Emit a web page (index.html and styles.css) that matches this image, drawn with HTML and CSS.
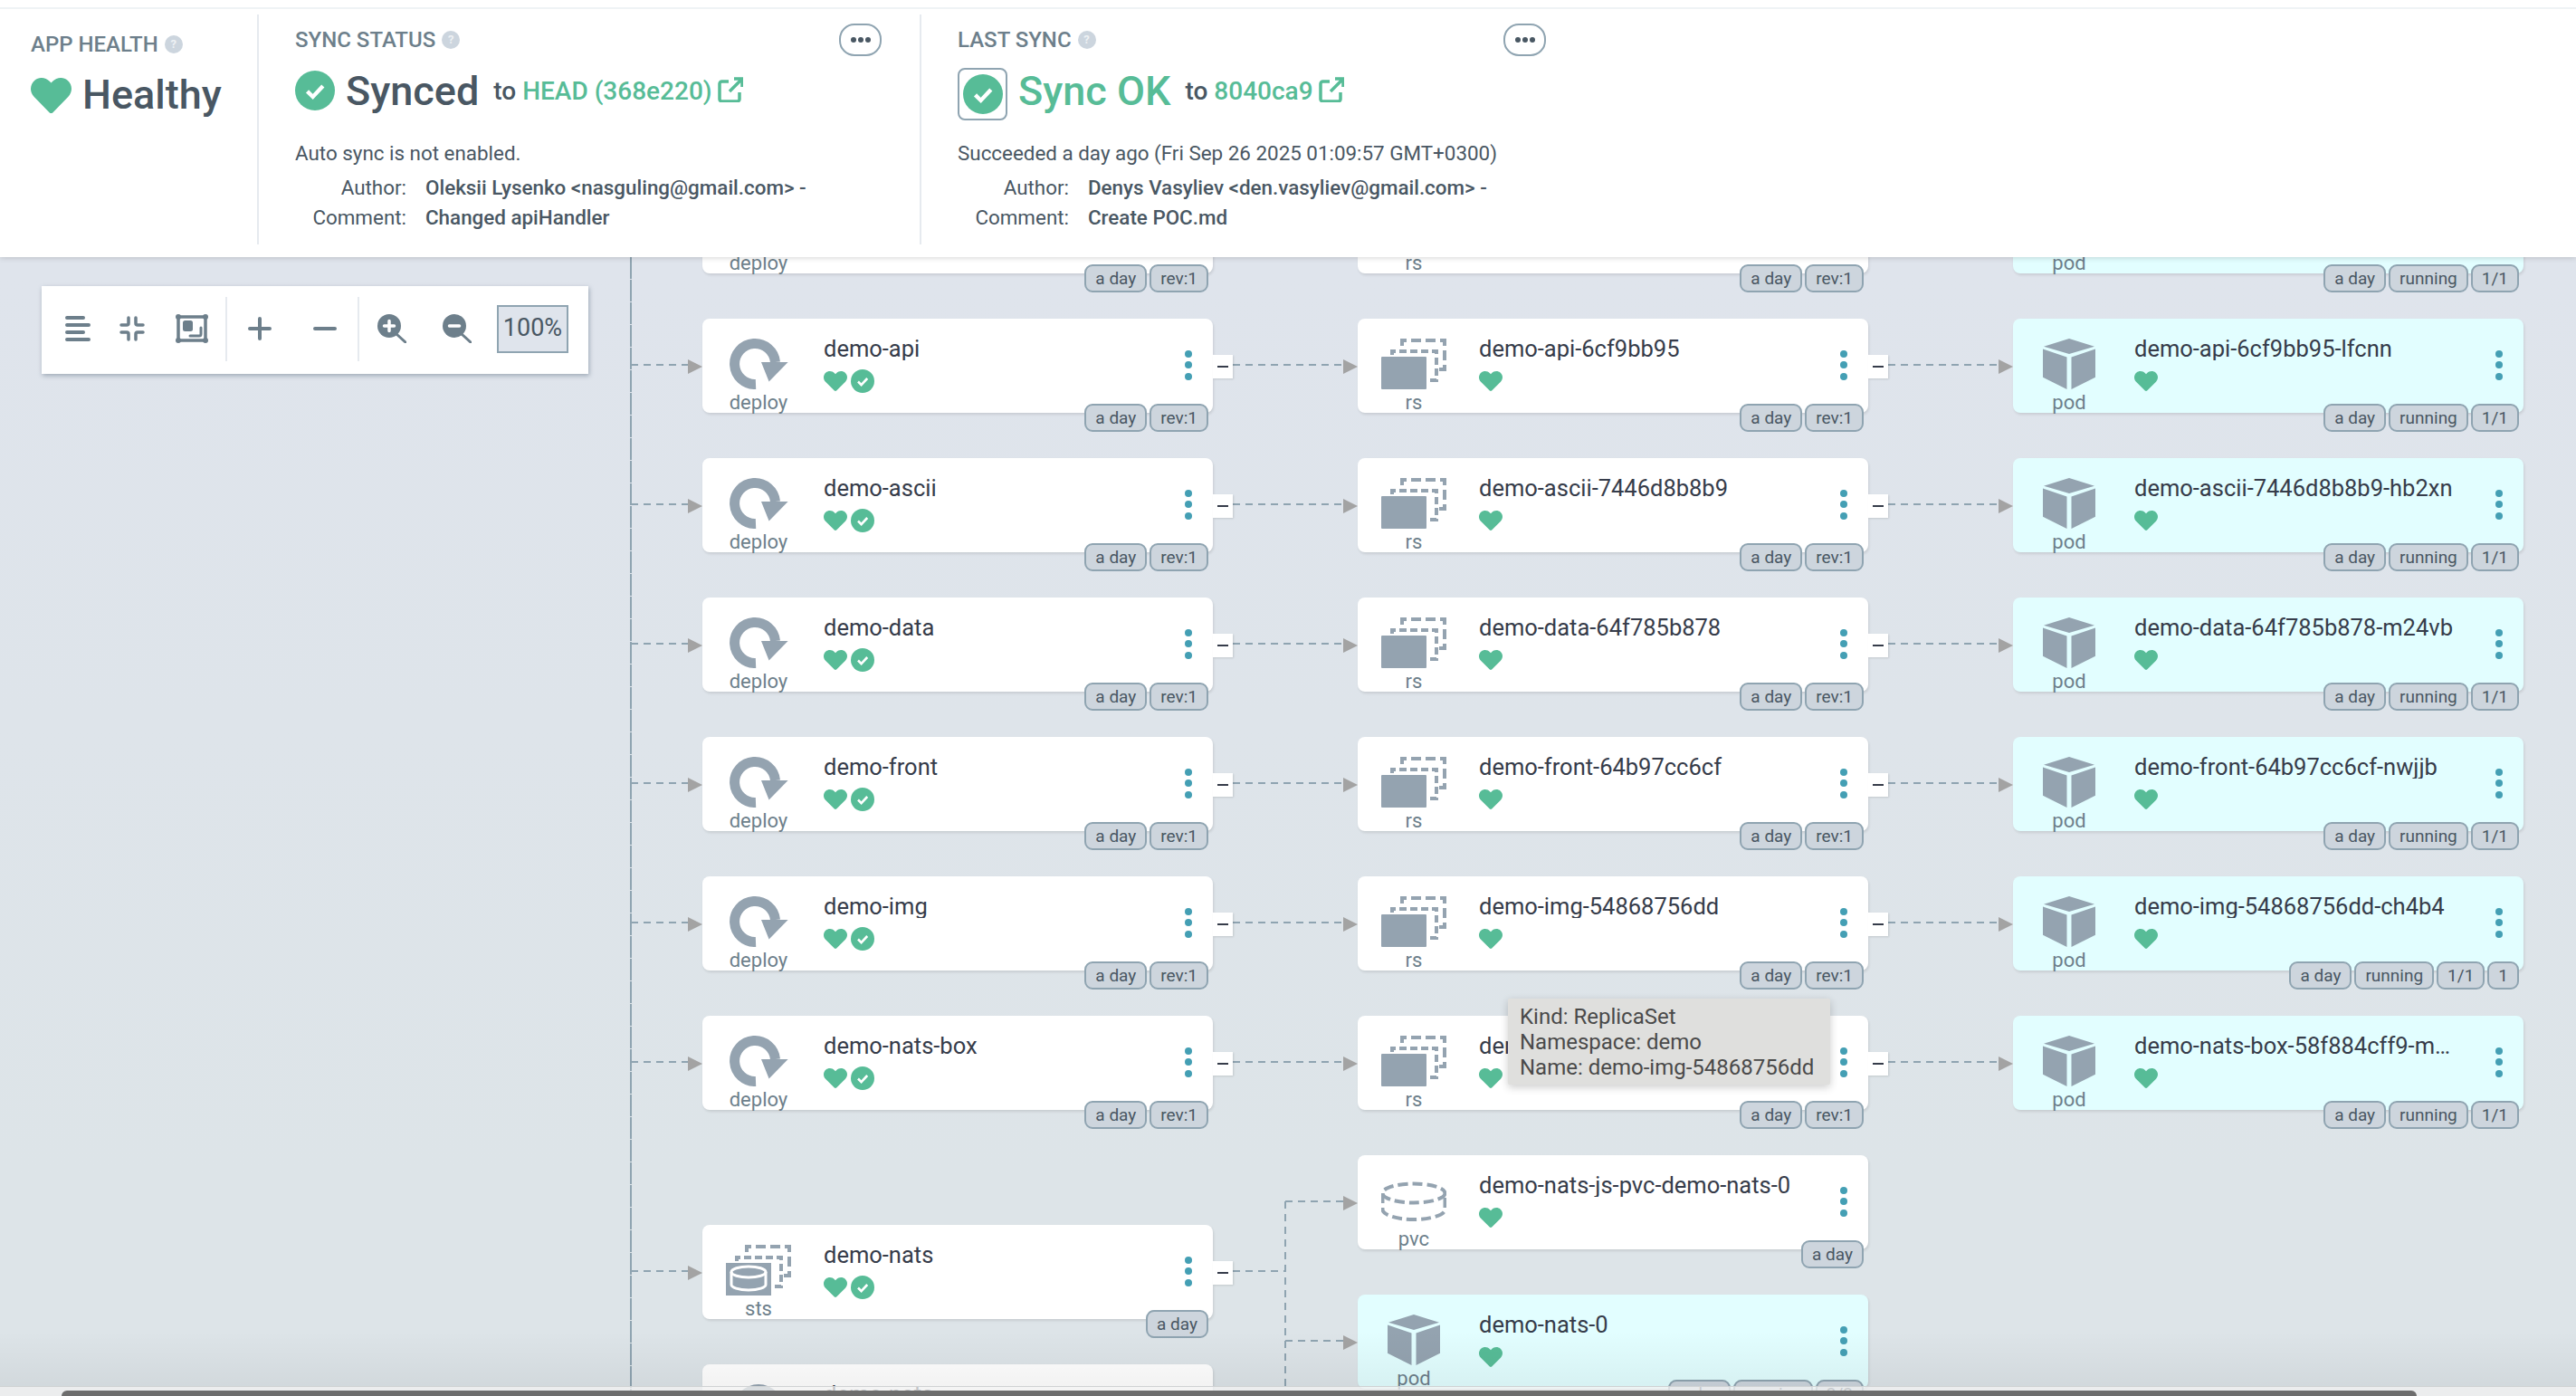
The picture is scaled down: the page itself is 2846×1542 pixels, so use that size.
FILE: index.html
```html
<!DOCTYPE html>
<html lang="en">

<head>
    <meta charset="UTF-8">
    <title>demo - Application Details</title>
    <link rel="stylesheet" href="styles.css">
</head>

<body>
    <svg class="defs" aria-hidden="true">
        <symbol id="heart" viewBox="0 32 512 448" preserveAspectRatio="none">
            <path d="M462.3 62.6C407.5 15.9 326 24.3 275.7 76.2L256 96.5l-19.7-20.3C186.1 24.3 104.5 15.9 49.7 62.6c-62.8 53.6-66.1 149.8-9.9 207.9l193.5 199.8c12.5 12.9 32.8 12.9 45.3 0l193.5-199.8c56.3-58.1 53-154.3-9.8-207.9z" />
        </symbol>
        <symbol id="check" viewBox="0 0 26 26">
            <circle cx="13" cy="13" r="13" />
            <path d="M8 13.5l3.6 3.6L18.2 10" fill="none" stroke="#fff" stroke-width="2.6" />
        </symbol>
        <symbol id="link" viewBox="0 0 28 28">
            <path d="M12 5H4.5A2.5 2.5 0 0 0 2 7.5v17A2.5 2.5 0 0 0 4.500 27h17a2.500 2.500 0 0 0 2.500-2.500V17M13 16L26 3M18 2h9v9" fill="none" stroke="currentColor" stroke-width="3.500" />
        </symbol>
        <symbol id="deploy" viewBox="0 0 66 56">
            <path d="M30 50.500A22.500 22.500 0 1 1 51.500 26" fill="none" stroke="#94a3b0" stroke-width="11" />
            <path d="M36 26H65.600L44.600 47.600z" fill="#94a3b0" />
        </symbol>
        <symbol id="rs" viewBox="0 0 72 56">
            <path d="M12 18V14H61V46H50" fill="none" stroke="#94a3b0" stroke-width="4" stroke-dasharray="8 4" />
            <path d="M23 8V2H70V34H61" fill="none" stroke="#94a3b0" stroke-width="4" stroke-dasharray="11 5" />
            <rect y="20" width="50" height="36" rx="1" fill="#94a3b0" />
        </symbol>
        <symbol id="sts" viewBox="0 0 72 56">
            <path d="M12 18V14H61V46H50" fill="none" stroke="#94a3b0" stroke-width="4" stroke-dasharray="8 4" />
            <path d="M23 8V2H70V34H61" fill="none" stroke="#94a3b0" stroke-width="4" stroke-dasharray="11 5" />
            <rect y="20" width="50" height="36" fill="#94a3b0" />
            <path d="M6 30v14c0 3 8 6 19 6s19-3 19-6V30" fill="none" stroke="#fff" stroke-width="3" />
            <ellipse cx="25" cy="30" rx="19" ry="6" fill="none" stroke="#fff" stroke-width="3" />
        </symbol>
        <symbol id="pod" viewBox="0 0 58 56">
            <path d="M29 0L57 8.700 29 17 1 8.700zM0 11.500L26.500 20.500V56L0 42.700zM58 11.500L31.500 20.500V56L58 42.700z" fill="#94a3b0" />
        </symbol>
        <symbol id="pvc" viewBox="0 0 72 44">
            <ellipse cx="36" cy="13" rx="34.500" ry="10.500" fill="none" stroke="#94a3b0" stroke-width="4" stroke-dasharray="11 5" />
            <path d="M1.500 13v18c0 6 16 11 34.500 11s34.500-5 34.500-11V13" fill="none" stroke="#94a3b0" stroke-width="4" stroke-dasharray="11 5" />
        </symbol>
        <symbol id="svc" viewBox="0 0 56 56">
            <circle cx="28" cy="28" r="28" fill="#94a3b0" />
        </symbol>
    </svg>

    <header class="status">
        <div class="topline"></div>
        <div class="panels">
            <section class="panel health">
                <h4>APP HEALTH <i class="help">?</i></h4>
                <div class="health-row">
                    <svg class="heart-big"><use href="#heart" /></svg>
                    <span>Healthy</span>
                </div>
            </section>

            <section class="panel">
                <div class="panel-head">
                    <h4>SYNC STATUS <i class="help">?</i></h4>
                    <button class="more"><i></i><i></i><i></i></button>
                </div>
                <div class="big-row">
                    <svg class="check-big"><use href="#check" /></svg>
                    <span class="big">Synced</span>
                    <span class="to">to</span>
                    <a class="rev">HEAD (368e220)</a>
                    <svg class="ext"><use href="#link" /></svg>
                </div>
                <p class="msg">Auto sync is not enabled.</p>
                <dl class="meta">
                    <dt>Author:</dt>
                    <dd>Oleksii Lysenko &lt;nasguling@gmail.com&gt; -</dd>
                    <dt>Comment:</dt>
                    <dd>Changed apiHandler</dd>
                </dl>
            </section>

            <section class="panel">
                <div class="panel-head">
                    <h4>LAST SYNC <i class="help">?</i></h4>
                    <button class="more"><i></i><i></i><i></i></button>
                </div>
                <div class="big-row">
                    <div class="op-box"><svg class="check-big"><use href="#check" /></svg></div>
                    <span class="big ok">Sync OK</span>
                    <span class="to">to</span>
                    <a class="rev">8040ca9</a>
                    <svg class="ext"><use href="#link" /></svg>
                </div>
                <p class="msg">Succeeded a day ago (Fri Sep 26 2025 01:09:57 GMT+0300)</p>
                <dl class="meta">
                    <dt>Author:</dt>
                    <dd>Denys Vasyliev &lt;den.vasyliev@gmail.com&gt; -</dd>
                    <dt>Comment:</dt>
                    <dd>Create POC.md</dd>
                </dl>
            </section>
        </div>
    </header>

    <main class="graph">
        <svg class="edges" viewBox="0 284 2846 1258">
            <path class="trunk" d="M697 284V1542" />
            <path class="edge" d="M697 249H762M697 403H762M697 557H762M697 711H762M697 865H762M697 1019H762M697 1173H762M697 1404H762M697 1558H762" />
            <path class="edge" d="M1362 249H1486M1362 403H1486M1362 557H1486M1362 711H1486M1362 865H1486M1362 1019H1486M1362 1173H1486" />
            <path class="edge" d="M2086 249H2210M2086 403H2210M2086 557H2210M2086 711H2210M2086 865H2210M2086 1019H2210M2086 1173H2210" />
            <path class="edge" d="M1362 1404H1420M1420 1327V1542M1420 1327H1486M1420 1481H1486" />
            <path class="arrow" d="M760 397l16 8-16 8zM760 551l16 8-16 8zM760 705l16 8-16 8zM760 859l16 8-16 8zM760 1013l16 8-16 8zM760 1167l16 8-16 8zM760 1398l16 8-16 8z" />
            <path class="arrow" d="M1484 397l16 8-16 8zM1484 551l16 8-16 8zM1484 705l16 8-16 8zM1484 859l16 8-16 8zM1484 1013l16 8-16 8zM1484 1167l16 8-16 8zM1484 1321l16 8-16 8zM1484 1475l16 8-16 8z" />
            <path class="arrow" d="M2208 397l16 8-16 8zM2208 551l16 8-16 8zM2208 705l16 8-16 8zM2208 859l16 8-16 8zM2208 1013l16 8-16 8zM2208 1167l16 8-16 8z" />
        </svg>

        <div class="toolbar">
            <svg class="tool t-align" viewBox="0 0 28 28"><path d="M2 2H20M2 10H26M2 18H20M2 26H26" /></svg>
            <svg class="tool t-compress" viewBox="0 0 28 28"><path d="M10 2V8a2 2 0 0 1-2 2H2M18 2V8a2 2 0 0 0 2 2H26M10 26V20a2 2 0 0 0-2-2H2M18 26V20a2 2 0 0 1 2-2H26" /></svg>
            <svg class="tool t-fit" viewBox="0 0 36 32">
                <path d="M3 3H33V29H3z" />
                <circle class="solid" cx="3" cy="3" r="3" />
                <circle class="solid" cx="33" cy="3" r="3" />
                <circle class="solid" cx="3" cy="29" r="3" />
                <circle class="solid" cx="33" cy="29" r="3" />
                <rect class="solid" x="8" y="7" width="11" height="12" rx="2.500" />
                <path class="thin" d="M28 15V22a2 2 0 0 1-2 2H16" />
            </svg>
            <div class="sep"></div>
            <svg class="tool t-plus" viewBox="0 0 26 26"><path d="M13 2V24M2 13H24" /></svg>
            <svg class="tool t-minus" viewBox="0 0 26 26"><path d="M2 13H24" /></svg>
            <div class="sep sep-2"></div>
            <svg class="tool t-zoom" viewBox="0 0 32 32">
                <circle class="solid" cx="13" cy="13" r="13" />
                <path class="thin" d="M21 22L31 31" />
                <path class="white" d="M13 7.500V18.500M7.500 13H18.500" />
            </svg>
            <svg class="tool t-zoom t-zoom-2" viewBox="0 0 32 32">
                <circle class="solid" cx="13" cy="13" r="13" />
                <path class="thin" d="M21 22L31 31" />
                <path class="white" d="M7.500 13H18.500" />
            </svg>
            <div class="zoom-level">100%</div>
        </div>

        <!-- row above the fold -->
        <div class="node c1 r0"><div class="kind"><svg class="ic deploy"><use href="#deploy" /></svg><span>deploy</span></div><div class="tags"><span>a day</span><span>rev:1</span></div></div>
        <div class="node c2 r0"><div class="kind"><svg class="ic rs"><use href="#rs" /></svg><span>rs</span></div><div class="tags"><span>a day</span><span>rev:1</span></div></div>
        <div class="node c3 r0 pod"><div class="kind"><svg class="ic cube"><use href="#pod" /></svg><span>pod</span></div><div class="tags"><span>a day</span><span>running</span><span>1/1</span></div></div>

        <!-- deployments -->
        <div class="node c1 r1">
            <div class="kind"><svg class="ic deploy"><use href="#deploy" /></svg><span>deploy</span></div>
            <div class="info"><div class="name">demo-api</div><div class="state"><svg class="heart"><use href="#heart" /></svg><svg class="check"><use href="#check" /></svg></div></div>
            <div class="menu"><i></i><i></i><i></i></div><div class="collapse"></div>
            <div class="tags"><span>a day</span><span>rev:1</span></div>
        </div>
        <div class="node c1 r2">
            <div class="kind"><svg class="ic deploy"><use href="#deploy" /></svg><span>deploy</span></div>
            <div class="info"><div class="name">demo-ascii</div><div class="state"><svg class="heart"><use href="#heart" /></svg><svg class="check"><use href="#check" /></svg></div></div>
            <div class="menu"><i></i><i></i><i></i></div><div class="collapse"></div>
            <div class="tags"><span>a day</span><span>rev:1</span></div>
        </div>
        <div class="node c1 r3">
            <div class="kind"><svg class="ic deploy"><use href="#deploy" /></svg><span>deploy</span></div>
            <div class="info"><div class="name">demo-data</div><div class="state"><svg class="heart"><use href="#heart" /></svg><svg class="check"><use href="#check" /></svg></div></div>
            <div class="menu"><i></i><i></i><i></i></div><div class="collapse"></div>
            <div class="tags"><span>a day</span><span>rev:1</span></div>
        </div>
        <div class="node c1 r4">
            <div class="kind"><svg class="ic deploy"><use href="#deploy" /></svg><span>deploy</span></div>
            <div class="info"><div class="name">demo-front</div><div class="state"><svg class="heart"><use href="#heart" /></svg><svg class="check"><use href="#check" /></svg></div></div>
            <div class="menu"><i></i><i></i><i></i></div><div class="collapse"></div>
            <div class="tags"><span>a day</span><span>rev:1</span></div>
        </div>
        <div class="node c1 r5">
            <div class="kind"><svg class="ic deploy"><use href="#deploy" /></svg><span>deploy</span></div>
            <div class="info"><div class="name">demo-img</div><div class="state"><svg class="heart"><use href="#heart" /></svg><svg class="check"><use href="#check" /></svg></div></div>
            <div class="menu"><i></i><i></i><i></i></div><div class="collapse"></div>
            <div class="tags"><span>a day</span><span>rev:1</span></div>
        </div>
        <div class="node c1 r6">
            <div class="kind"><svg class="ic deploy"><use href="#deploy" /></svg><span>deploy</span></div>
            <div class="info"><div class="name">demo-nats-box</div><div class="state"><svg class="heart"><use href="#heart" /></svg><svg class="check"><use href="#check" /></svg></div></div>
            <div class="menu"><i></i><i></i><i></i></div><div class="collapse"></div>
            <div class="tags"><span>a day</span><span>rev:1</span></div>
        </div>
        <div class="node c1 r7">
            <div class="kind"><svg class="ic rs"><use href="#sts" /></svg><span>sts</span></div>
            <div class="info"><div class="name">demo-nats</div><div class="state"><svg class="heart"><use href="#heart" /></svg><svg class="check"><use href="#check" /></svg></div></div>
            <div class="menu"><i></i><i></i><i></i></div><div class="collapse"></div>
            <div class="tags"><span>a day</span></div>
        </div>
        <div class="node c1 r8">
            <div class="kind"><svg class="ic svc"><use href="#svc" /></svg><span>svc</span></div>
            <div class="info"><div class="name">demo-nats</div></div>
        </div>

        <!-- replica sets -->
        <div class="node c2 r1">
            <div class="kind"><svg class="ic rs"><use href="#rs" /></svg><span>rs</span></div>
            <div class="info"><div class="name">demo-api-6cf9bb95</div><div class="state"><svg class="heart"><use href="#heart" /></svg></div></div>
            <div class="menu"><i></i><i></i><i></i></div><div class="collapse"></div>
            <div class="tags"><span>a day</span><span>rev:1</span></div>
        </div>
        <div class="node c2 r2">
            <div class="kind"><svg class="ic rs"><use href="#rs" /></svg><span>rs</span></div>
            <div class="info"><div class="name">demo-ascii-7446d8b8b9</div><div class="state"><svg class="heart"><use href="#heart" /></svg></div></div>
            <div class="menu"><i></i><i></i><i></i></div><div class="collapse"></div>
            <div class="tags"><span>a day</span><span>rev:1</span></div>
        </div>
        <div class="node c2 r3">
            <div class="kind"><svg class="ic rs"><use href="#rs" /></svg><span>rs</span></div>
            <div class="info"><div class="name">demo-data-64f785b878</div><div class="state"><svg class="heart"><use href="#heart" /></svg></div></div>
            <div class="menu"><i></i><i></i><i></i></div><div class="collapse"></div>
            <div class="tags"><span>a day</span><span>rev:1</span></div>
        </div>
        <div class="node c2 r4">
            <div class="kind"><svg class="ic rs"><use href="#rs" /></svg><span>rs</span></div>
            <div class="info"><div class="name">demo-front-64b97cc6cf</div><div class="state"><svg class="heart"><use href="#heart" /></svg></div></div>
            <div class="menu"><i></i><i></i><i></i></div><div class="collapse"></div>
            <div class="tags"><span>a day</span><span>rev:1</span></div>
        </div>
        <div class="node c2 r5">
            <div class="kind"><svg class="ic rs"><use href="#rs" /></svg><span>rs</span></div>
            <div class="info"><div class="name">demo-img-54868756dd</div><div class="state"><svg class="heart"><use href="#heart" /></svg></div></div>
            <div class="menu"><i></i><i></i><i></i></div><div class="collapse"></div>
            <div class="tags"><span>a day</span><span>rev:1</span></div>
        </div>
        <div class="node c2 r6">
            <div class="kind"><svg class="ic rs"><use href="#rs" /></svg><span>rs</span></div>
            <div class="info"><div class="name">demo-nats-box-58f884cff9</div><div class="state"><svg class="heart"><use href="#heart" /></svg></div></div>
            <div class="menu"><i></i><i></i><i></i></div><div class="collapse"></div>
            <div class="tags"><span>a day</span><span>rev:1</span></div>
        </div>
        <div class="node c2 r-pvc">
            <div class="kind"><svg class="ic pvc"><use href="#pvc" /></svg><span>pvc</span></div>
            <div class="info"><div class="name">demo-nats-js-pvc-demo-nats-0</div><div class="state"><svg class="heart"><use href="#heart" /></svg></div></div>
            <div class="menu"><i></i><i></i><i></i></div>
            <div class="tags"><span>a day</span></div>
        </div>
        <div class="node c2 r-pod pod">
            <div class="kind"><svg class="ic cube"><use href="#pod" /></svg><span>pod</span></div>
            <div class="info"><div class="name">demo-nats-0</div><div class="state"><svg class="heart"><use href="#heart" /></svg></div></div>
            <div class="menu"><i></i><i></i><i></i></div>
            <div class="tags"><span>a day</span><span>running</span><span>3/3</span></div>
        </div>

        <!-- pods -->
        <div class="node c3 r1 pod">
            <div class="kind"><svg class="ic cube"><use href="#pod" /></svg><span>pod</span></div>
            <div class="info"><div class="name">demo-api-6cf9bb95-lfcnn</div><div class="state"><svg class="heart"><use href="#heart" /></svg></div></div>
            <div class="menu"><i></i><i></i><i></i></div>
            <div class="tags"><span>a day</span><span>running</span><span>1/1</span></div>
        </div>
        <div class="node c3 r2 pod">
            <div class="kind"><svg class="ic cube"><use href="#pod" /></svg><span>pod</span></div>
            <div class="info"><div class="name">demo-ascii-7446d8b8b9-hb2xn</div><div class="state"><svg class="heart"><use href="#heart" /></svg></div></div>
            <div class="menu"><i></i><i></i><i></i></div>
            <div class="tags"><span>a day</span><span>running</span><span>1/1</span></div>
        </div>
        <div class="node c3 r3 pod">
            <div class="kind"><svg class="ic cube"><use href="#pod" /></svg><span>pod</span></div>
            <div class="info"><div class="name">demo-data-64f785b878-m24vb</div><div class="state"><svg class="heart"><use href="#heart" /></svg></div></div>
            <div class="menu"><i></i><i></i><i></i></div>
            <div class="tags"><span>a day</span><span>running</span><span>1/1</span></div>
        </div>
        <div class="node c3 r4 pod">
            <div class="kind"><svg class="ic cube"><use href="#pod" /></svg><span>pod</span></div>
            <div class="info"><div class="name">demo-front-64b97cc6cf-nwjjb</div><div class="state"><svg class="heart"><use href="#heart" /></svg></div></div>
            <div class="menu"><i></i><i></i><i></i></div>
            <div class="tags"><span>a day</span><span>running</span><span>1/1</span></div>
        </div>
        <div class="node c3 r5 pod">
            <div class="kind"><svg class="ic cube"><use href="#pod" /></svg><span>pod</span></div>
            <div class="info"><div class="name">demo-img-54868756dd-ch4b4</div><div class="state"><svg class="heart"><use href="#heart" /></svg></div></div>
            <div class="menu"><i></i><i></i><i></i></div>
            <div class="tags"><span>a day</span><span>running</span><span>1/1</span><span>1</span></div>
        </div>
        <div class="node c3 r6 pod">
            <div class="kind"><svg class="ic cube"><use href="#pod" /></svg><span>pod</span></div>
            <div class="info"><div class="name">demo-nats-box-58f884cff9-m…</div><div class="state"><svg class="heart"><use href="#heart" /></svg></div></div>
            <div class="menu"><i></i><i></i><i></i></div>
            <div class="tags"><span>a day</span><span>running</span><span>1/1</span></div>
        </div>

        <div class="tooltip">
            <div>Kind: ReplicaSet</div>
            <div>Namespace: demo</div>
            <div>Name: demo-img-54868756dd</div>
        </div>
    </main>

    <div class="fade"></div>
    <div class="scrollbar"><div class="thumb"></div></div>
</body>

</html>
```

FILE: styles.css
```css
* {
    margin: 0;
    padding: 0;
    box-sizing: border-box;
}

body {
    width: 2846px;
    height: 1542px;
    overflow: hidden;
    position: relative;
    font-family: Roboto, "Liberation Sans", sans-serif;
    color: #495763;
    background: linear-gradient(#dfe4ec 300px, #dde4e8 1300px);
}

.defs {
    position: absolute;
    width: 0;
    height: 0;
}

/* status header */
.status {
    position: relative;
    z-index: 2;
    height: 284px;
    padding-top: 8px;
    background: #fff;
    box-shadow: 0 1px 6px rgba(0, 0, 0, .16);
}

.topline {
    height: 2px;
    background: #eff3f5;
}

.panels {
    display: flex;
    margin-top: 6px;
    height: 254px;
}

.panel {
    width: 732px;
    padding: 10px 42px 0 40px;
    border-right: 2px solid #e6eaef;
}

.panel:last-child {
    border-right: none;
}

.panel.health {
    width: 286px;
    padding: 20px 0 0 34px;
}

h4 {
    font-size: 24px;
    font-weight: 500;
    line-height: 26px;
    color: #6d7f8b;
    display: flex;
    align-items: center;
    gap: 7px;
}

.help {
    width: 20px;
    height: 20px;
    border-radius: 50%;
    background: #ccd5de;
    color: #eef1f4;
    font-size: 13px;
    font-style: normal;
    font-weight: 700;
    line-height: 20px;
    text-align: center;
}

.health-row {
    display: flex;
    align-items: center;
    gap: 12px;
    margin-top: 17px;
    font-size: 45px;
    font-weight: 500;
    line-height: 52px;
}

.heart-big {
    width: 45px;
    height: 39px;
    fill: #57bc97;
}

.panel-head {
    display: flex;
    align-items: center;
    justify-content: space-between;
    height: 36px;
}

.more {
    width: 47px;
    height: 36px;
    border: 2px solid #8fa4b1;
    border-radius: 17px;
    background: #fff;
    display: flex;
    align-items: center;
    justify-content: center;
    gap: 2px;
}

.more i {
    width: 6px;
    height: 6px;
    border-radius: 50%;
    background: #495763;
}

.big-row {
    display: flex;
    align-items: flex-start;
    height: 58px;
    margin-top: 13px;
    line-height: 52px;
}

.check-big {
    width: 44px;
    height: 44px;
    margin-top: 3px;
    fill: #57bc97;
}

.op-box {
    width: 55px;
    height: 58px;
    border: 2px solid #8fa4b1;
    border-radius: 8px;
    display: flex;
    align-items: center;
    justify-content: center;
}

.op-box .check-big {
    margin-top: 0;
}

.big {
    margin-left: 12px;
    font-size: 45px;
    font-weight: 500;
}

.big.ok {
    color: #57bc97;
}

.to {
    margin-left: 16px;
    font-size: 28px;
    font-weight: 500;
}

.rev {
    margin-left: 7px;
    font-size: 28px;
    font-weight: 500;
    color: #57bc97;
}

.ext {
    width: 28px;
    height: 28px;
    margin: 10px 0 0 6px;
    color: #57bc97;
}

.msg {
    margin-top: 21px;
    font-size: 22.400px;
    line-height: 30px;
}

.meta {
    display: grid;
    grid-template-columns: 123px auto;
    grid-auto-rows: 33px;
    column-gap: 21px;
    margin-top: 7px;
    font-size: 22.400px;
    line-height: 33px;
}

.meta dt {
    text-align: right;
}

.meta dd {
    font-weight: 500;
}

/* graph canvas */
.graph {
    position: relative;
    height: 1258px;
    overflow: hidden;
}

.edges {
    position: absolute;
    left: 0;
    top: 0;
    width: 2846px;
    height: 1258px;
}

.trunk,
.edge {
    fill: none;
    stroke: #8fa4b1;
    stroke-width: 2;
}

.trunk {
    stroke-dasharray: 24 1;
}

.edge {
    stroke-dasharray: 8 6;
}

.arrow {
    fill: #a3a3a3;
}

.toolbar {
    position: absolute;
    left: 46px;
    top: 32px;
    width: 604px;
    height: 97px;
    padding: 0 0 3px 26px;
    background: #fff;
    box-shadow: 1px 2px 5px rgba(60, 80, 100, .4);
    display: flex;
    align-items: center;
}

.tool {
    flex: none;
    fill: none;
    stroke: #6d7f8b;
    stroke-width: 4;
    stroke-linecap: round;
}

.tool .solid {
    fill: #6d7f8b;
    stroke: none;
}

.tool .thin {
    stroke-width: 3;
}

.tool .white {
    stroke: #fff;
    stroke-width: 3.500;
}

.t-align,
.t-compress {
    width: 28px;
    height: 28px;
}

.t-align {
    margin-top: -1px;
}

.t-compress {
    margin-left: 32px;
    stroke-width: 3.500;
}

.t-fit {
    width: 36px;
    height: 32px;
    margin-left: 34px;
    stroke-width: 3.500;
}

.sep {
    width: 2px;
    height: 71px;
    margin: 0 23px 0 19px;
    background: #e6eaef;
}

.t-plus,
.t-minus {
    width: 26px;
    height: 26px;
}

.t-minus {
    margin-left: 46px;
}

.sep-2 {
    margin: 0 20px 0 23px;
}

.t-zoom {
    width: 32px;
    height: 32px;
}

.t-zoom-2 {
    margin-left: 40px;
}

.zoom-level {
    width: 79px;
    height: 53px;
    margin-left: 28px;
    border: 2px solid #8fa4b1;
    background: #dfe4ec;
    font-size: 27px;
    font-weight: 400;
    line-height: 47px;
    text-align: center;
}

/* nodes */
.node {
    position: absolute;
    width: 564px;
    height: 104px;
    display: flex;
    background: #fff;
    border-radius: 8px;
    box-shadow: 1px 2px 3px rgba(0, 0, 0, .1);
}

.node.pod {
    background: #e2feff;
}

.c1 { left: 776px; }
.c2 { left: 1500px; }
.c3 { left: 2224px; }

.r0 { top: -86px; }
.r1 { top: 68px; }
.r2 { top: 222px; }
.r3 { top: 376px; }
.r4 { top: 530px; }
.r5 { top: 684px; }
.r6 { top: 838px; }
.r7 { top: 1069px; }
.r8 { top: 1223px; }
.r-pvc { top: 992px; }
.r-pod { top: 1146px; }

.kind {
    flex: none;
    width: 124px;
    padding-top: 22px;
    display: flex;
    flex-direction: column;
    align-items: center;
    font-size: 22px;
    line-height: 26px;
    color: #6d7f8b;
}

.kind span {
    margin-top: 2px;
}

.ic {
    height: 56px;
    flex: none;
}

.ic.deploy { width: 66px; }
.ic.rs { width: 72px; }
.ic.cube { width: 58px; }
.ic.svc { width: 56px; }

.ic.pvc {
    width: 72px;
    height: 44px;
    margin: 7px 0 5px;
}

.info {
    flex: none;
    width: 364px;
    margin-left: 10px;
    padding-top: 20px;
}

.name {
    font-size: 25.500px;
    line-height: 26px;
    color: #363c4a;
    white-space: nowrap;
    overflow: hidden;
    text-overflow: ellipsis;
}

.state {
    display: flex;
    align-items: center;
    gap: 4px;
    height: 26px;
    margin-top: 10px;
}

.heart {
    width: 26px;
    height: 22px;
    fill: #57bc97;
}

.check {
    width: 26px;
    height: 26px;
    fill: #57bc97;
}

.menu {
    position: absolute;
    right: 23px;
    top: 35px;
    display: flex;
    flex-direction: column;
    gap: 4.400px;
}

.menu i {
    width: 8px;
    height: 8px;
    border-radius: 50%;
    background: #449fb4;
}

.collapse {
    position: absolute;
    right: -22px;
    top: 40px;
    width: 22px;
    height: 26px;
    background: #fff;
    box-shadow: 1px 1px 2px rgba(0, 0, 0, .12);
}

.collapse::after {
    content: "";
    position: absolute;
    left: 5px;
    top: 12px;
    width: 12px;
    height: 2px;
    background: #363c4a;
}

.tags {
    position: absolute;
    right: 5px;
    top: 94px;
    display: flex;
    gap: 3px;
}

.tags span {
    height: 31px;
    padding: 0 10px;
    border: 2px solid #8fa4b1;
    border-radius: 9px;
    background: #cdd5dd;
    font-size: 19px;
    line-height: 27px;
    color: #495763;
}

.tooltip {
    position: absolute;
    left: 1666px;
    top: 819px;
    width: 356px;
    height: 95px;
    padding: 6px 13px;
    background: #dfdfdd;
    border-radius: 2px;
    box-shadow: 0 3px 10px rgba(0, 0, 0, .2);
    font-size: 24px;
    line-height: 28px;
    color: #4a4a4a;
    white-space: nowrap;
}

/* bottom of the window */
.fade {
    position: absolute;
    left: 0;
    right: 0;
    top: 1470px;
    height: 62px;
    background: linear-gradient(rgba(0, 0, 0, 0), rgba(0, 0, 0, .05));
    pointer-events: none;
}

.scrollbar {
    position: absolute;
    left: 0;
    right: 0;
    bottom: 0;
    height: 11px;
    border-top: 1px solid #cfd2d3;
    background: rgba(240, 240, 240, .75);
}

.thumb {
    position: absolute;
    left: 68px;
    bottom: 0;
    width: 2602px;
    height: 6px;
    border-radius: 6px 6px 0 0;
    background: #6d6d6d;
}
```
